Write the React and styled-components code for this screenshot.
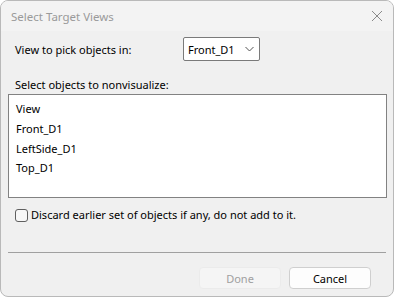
import React from "react";
import styled, { createGlobalStyle } from "styled-components";

const GlobalStyle = createGlobalStyle`
  html, body {
    margin: 0;
    padding: 0;
    background: #ffffff;
  }
  * {
    box-sizing: border-box;
  }
`;

const Window = styled.div`
  width: 394px;
  height: 297px;
  display: flex;
  flex-direction: column;
  border: 1px solid #b9b9b9;
  border-radius: 8px;
  overflow: hidden;
  background: #f0f0f0;
  font-family: "Noto Sans", "Open Sans", sans-serif;
  font-size: 11px;
  color: #000;
`;

const TitleBar = styled.div`
  height: 30px;
  flex: none;
  display: flex;
  align-items: center;
  justify-content: space-between;
  padding: 0 9px 0 10px;
  background: #f3f3f3;
  color: #9a9a9a;
  font-size: 11.5px;
`;

const CloseButton = styled.div`
  width: 14px;
  height: 14px;
  display: flex;
  align-items: center;
  justify-content: center;
`;

const Body = styled.div`
  flex: 1;
  display: flex;
  flex-direction: column;
  padding: 6px 6px 0 7px;
`;

const PickRow = styled.div`
  display: flex;
  align-items: center;
  height: 24px;
  padding-left: 7px;
`;

const PickLabel = styled.span`
  width: 168px;
`;

const Dropdown = styled.div`
  width: 77px;
  height: 24px;
  display: flex;
  align-items: center;
  justify-content: space-between;
  padding: 0 5px 0 4px;
  background: #fff;
  border: 1px solid #7a7a7a;
  border-radius: 2px;
`;

const SectionLabel = styled.div`
  margin-top: 15px;
  padding-left: 7px;
  line-height: 18px;
`;

const ListBox = styled.div`
  height: 104px;
  border: 1px solid #828282;
  background: #fff;
  padding: 3px 7px;
  display: flex;
  flex-direction: column;
`;

const ListItem = styled.div`
  line-height: ${(p) => (p.$header ? "21px" : "19.5px")};
  height: ${(p) => (p.$header ? "21px" : "19.5px")};
`;

const CheckRow = styled.label`
  display: flex;
  align-items: center;
  gap: 3px;
  margin-top: 9px;
  padding-left: 7px;
  line-height: 16px;
`;

const Box = styled.span`
  width: 13px;
  height: 13px;
  border: 1px solid #5f5f5f;
  border-radius: 3px;
  background: #f7f7f7;
`;

const Separator = styled.div`
  margin-top: 29px;
  margin-right: 1px;
  height: 1px;
  background: #a0a0a0;
`;

const Footer = styled.div`
  display: flex;
  justify-content: flex-end;
  gap: 8px;
  padding: 14px 16px 0 0;
`;

const Button = styled.div`
  width: 82px;
  height: 22px;
  display: flex;
  align-items: center;
  justify-content: center;
  border-radius: 4px;
  border: 1px solid ${(p) => (p.$disabled ? "#ebebeb" : "#cfcfcf")};
  background: ${(p) => (p.$disabled ? "#f5f5f5" : "#fdfdfd")};
  color: ${(p) => (p.$disabled ? "#a0a0a0" : "#000")};
`;

export default function App() {
  return (
    <>
      <GlobalStyle />
      <Window>
        <TitleBar>
          <span>Select Target Views</span>
          <CloseButton>
            <svg width="12" height="12" viewBox="0 0 12 12">
              <path d="M1 1L11 11M11 1L1 11" stroke="#8a8a8a" strokeWidth="1" />
            </svg>
          </CloseButton>
        </TitleBar>
        <Body>
          <PickRow>
            <PickLabel>View to pick objects in:</PickLabel>
            <Dropdown>
              <span>Front_D1</span>
              <svg width="9" height="6" viewBox="0 0 9 6">
                <path d="M0.5 1L4.5 5L8.5 1" stroke="#555" strokeWidth="1" fill="none" />
              </svg>
            </Dropdown>
          </PickRow>
          <SectionLabel>Select objects to nonvisualize:</SectionLabel>
          <ListBox>
            <ListItem $header>View</ListItem>
            <ListItem>Front_D1</ListItem>
            <ListItem>LeftSide_D1</ListItem>
            <ListItem>Top_D1</ListItem>
          </ListBox>
          <CheckRow>
            <Box />
            <span>Discard earlier set of objects if any, do not add to it.</span>
          </CheckRow>
          <Separator />
          <Footer>
            <Button $disabled>Done</Button>
            <Button>Cancel</Button>
          </Footer>
        </Body>
      </Window>
    </>
  );
}
